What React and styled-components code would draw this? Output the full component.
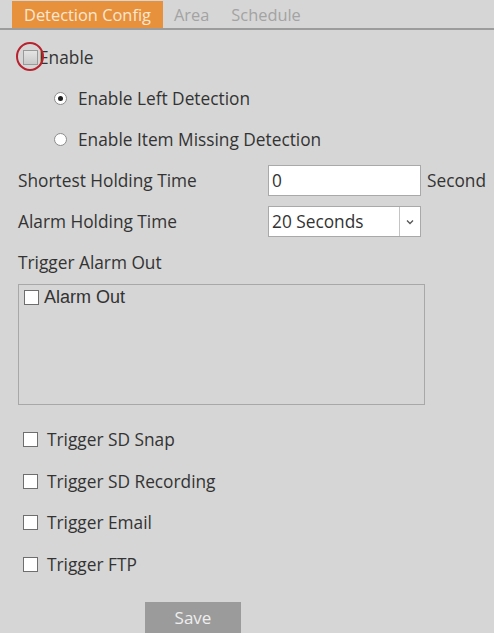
import React from 'react'
import styled, { createGlobalStyle } from 'styled-components'

const GlobalStyle = createGlobalStyle`
  body {
    margin: 0;
    background: #ffffff;
    font-family: "Open Sans", "Noto Sans", sans-serif;
  }
`

const Panel = styled.div`
  width: 494px;
  height: 633px;
  background: #d6d6d6;
  display: flex;
  flex-direction: column;
  box-sizing: border-box;
`

const TabBar = styled.div`
  height: 30px;
  display: flex;
  align-items: flex-end;
  padding-left: 12px;
  border-bottom: 2px solid #9c9c9c;
  box-sizing: border-box;
`

const Tab = styled.div`
  height: 27px;
  display: flex;
  align-items: center;
  padding: 0 ${p => (p.active ? '12px' : '11px')};
  background: ${p => (p.active ? '#e8913d' : 'transparent')};
  color: ${p => (p.active ? '#fbe6cf' : '#a3a3a3')};
  font-size: 16.4px;
`

const Content = styled.div`
  padding-left: 18px;
  display: flex;
  flex-direction: column;
  color: #333333;
  font-size: 17.3px;
`

const Row = styled.div`
  height: ${p => p.h || 41}px;
  margin-top: ${p => p.mt || 0}px;
  display: flex;
  align-items: center;
  padding-left: ${p => p.indent || 0}px;
  gap: ${p => p.gap || 0}px;
`

const CheckWrap = styled.span`
  position: relative;
  display: inline-flex;
  margin-left: ${p => p.ml || 0}px;
`

const Check = styled.span`
  width: 13px;
  height: 13px;
  flex: none;
  border: 1px solid ${p => (p.muted ? '#9a9a9a' : '#6e6e6e')};
  background: ${p => (p.muted ? 'linear-gradient(#e4e4e4, #c9c9c9)' : '#ffffff')};
  display: inline-block;
`

const Ring = styled.span`
  position: absolute;
  left: -7px;
  top: -8px;
  width: 24px;
  height: 25px;
  border: 2px solid #b8222f;
  border-radius: 50%;
`

const Radio = styled.span`
  width: 11px;
  height: 11px;
  border-radius: 50%;
  border: 1px solid #8c8c8c;
  background: #ffffff;
  display: inline-flex;
  align-items: center;
  justify-content: center;
  &::after {
    content: '';
    width: 5px;
    height: 5px;
    border-radius: 50%;
    background: ${p => (p.checked ? '#1f1f1f' : 'transparent')};
  }
`

const Label = styled.span`
  width: 250px;
`

const TextInput = styled.div`
  width: 153px;
  height: 31px;
  box-sizing: border-box;
  border: 1px solid #a9a9a9;
  background: #ffffff;
  display: flex;
  align-items: center;
  padding-left: 3px;
`

const Unit = styled.span`
  margin-left: 6px;
`

const Select = styled.div`
  width: 153px;
  height: 31px;
  box-sizing: border-box;
  border: 1px solid #a9a9a9;
  background: #ffffff;
  display: flex;
  align-items: stretch;
`

const SelectValue = styled.span`
  flex: 1;
  display: flex;
  align-items: center;
  padding-left: 3px;
`

const SelectArrow = styled.span`
  width: 20px;
  border-left: 1px solid #c4c4c4;
  display: flex;
  align-items: center;
  justify-content: center;
`

const AlarmBox = styled.div`
  width: 407px;
  height: 121px;
  margin-top: 1px;
  box-sizing: border-box;
  border: 1px solid #a8a8a8;
  padding: 5px 0 0 5px;
  display: flex;
  align-items: flex-start;
  gap: 5px;
  font-family: "Liberation Sans", Arial, sans-serif;
  font-size: 18px;
  line-height: 15px;
`

const SaveButton = styled.button`
  width: 96px;
  height: 31px;
  margin-left: 145px;
  margin-top: auto;
  border: none;
  background: #9b9b9b;
  color: #eeeeee;
  font-family: "Open Sans", "Noto Sans", sans-serif;
  font-size: 17px;
  padding: 0;
`

const Footer = styled.div`
  flex: 1;
  display: flex;
`

const Chevron = () => (
  <svg width="8" height="6" viewBox="0 0 8 6">
    <path d="M1 1.5 L4 4.5 L7 1.5" fill="none" stroke="#555" strokeWidth="1.3" />
  </svg>
)

const triggers = ['Trigger SD Snap', 'Trigger SD Recording', 'Trigger Email', 'Trigger FTP']

export default function App() {
  return (
    <>
      <GlobalStyle />
      <Panel>
        <TabBar>
          <Tab active>Detection Config</Tab>
          <Tab>Area</Tab>
          <Tab>Schedule</Tab>
        </TabBar>
        <Content>
          <Row h={42} mt={6}>
            <CheckWrap ml={5}>
              <Check muted />
              <Ring />
            </CheckWrap>
            <span style={{ marginLeft: 1 }}>Enable</span>
          </Row>
          <Row h={41} indent={36} gap={11}>
            <Radio checked />
            <span>Enable Left Detection</span>
          </Row>
          <Row h={41} indent={36} gap={11}>
            <Radio />
            <span>Enable Item Missing Detection</span>
          </Row>
          <Row h={41}>
            <Label>Shortest Holding Time</Label>
            <TextInput>0</TextInput>
            <Unit>Second</Unit>
          </Row>
          <Row h={41}>
            <Label>Alarm Holding Time</Label>
            <Select>
              <SelectValue>20 Seconds</SelectValue>
              <SelectArrow>
                <Chevron />
              </SelectArrow>
            </Select>
          </Row>
          <Row h={41}>Trigger Alarm Out</Row>
          <AlarmBox>
            <Check />
            <span>Alarm Out</span>
          </AlarmBox>
          <Row h={14} />
          {triggers.map(t => (
            <Row key={t} h={41.5} indent={5} gap={9}>
              <Check />
              <span>{t}</span>
            </Row>
          ))}
        </Content>
        <Footer>
          <SaveButton>Save</SaveButton>
        </Footer>
      </Panel>
    </>
  )
}
